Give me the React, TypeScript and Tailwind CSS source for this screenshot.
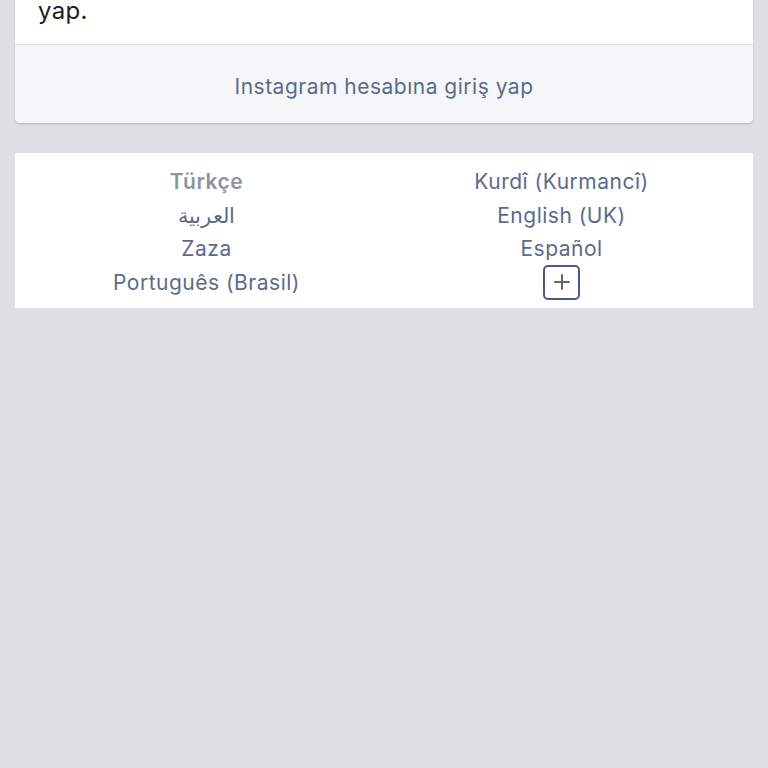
import React from "react";

const left = ["Türkçe", "العربية", "Zaza", "Português (Brasil)"];
const right = ["Kurdî (Kurmancî)", "English (UK)", "Español"];

export default function App() {
  return (
    <div
      className="w-[768px] h-[768px] overflow-hidden bg-[#dddfe2]"
      style={{ fontFamily: "Inter, 'Noto Sans', sans-serif" }}
    >
      {/* login card (top cut off) */}
      <div className="mx-[15px] -mt-[10px] rounded-b-[5px] bg-white shadow-[0_1px_2px_rgba(0,0,0,0.2)] overflow-hidden">
        <div className="pl-[23px] h-[54px] text-[24px] leading-[42px] tracking-[0.3px] text-[#1c1e21]">yap.</div>
        <div className="h-[79px] pt-[6px] border-t border-[#e0e2e6] bg-[#f5f6f7] flex items-center justify-center">
          <span className="text-[21px] tracking-[0.5px] text-[#5b6b8c]">Instagram hesabına giriş yap</span>
        </div>
      </div>

      {/* languages */}
      <div className="mx-[15px] mt-[30px] bg-white px-[14px] pt-[12px] pb-[8px] grid grid-cols-2">
        <div className="flex flex-col items-center">
          {left.map((l, i) => (
            <div
              key={l}
              className={
                "h-[33.5px] leading-[33.5px] text-[21px] tracking-[0.5px] " +
                (i === 0 ? "font-semibold text-[#8d949e]" : "text-[#5b6b8c]")
              }
            >
              {l}
            </div>
          ))}
        </div>
        <div className="flex flex-col items-center">
          {right.map((l) => (
            <div key={l} className="h-[33.5px] leading-[33.5px] text-[21px] tracking-[0.5px] text-[#5b6b8c]">
              {l}
            </div>
          ))}
          <div className="mt-[-1px] w-[37px] h-[35px] rounded-[5px] border-2 border-[#4b5a8a] flex items-center justify-center">
            <svg width="18" height="18" viewBox="0 0 18 18">
              <path d="M9 2v14M2 9h14" stroke="#5f6670" strokeWidth="2" strokeLinecap="round" />
            </svg>
          </div>
        </div>
      </div>
    </div>
  );
}
